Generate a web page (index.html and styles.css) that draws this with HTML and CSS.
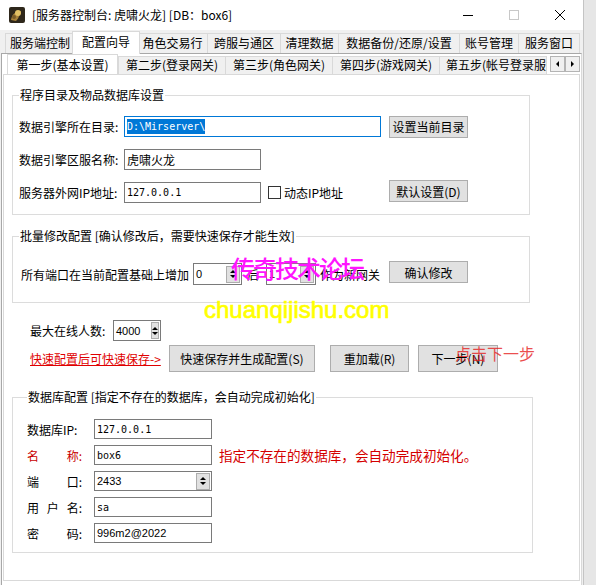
FILE: index.html
```html
<!DOCTYPE html>
<html lang="zh-CN">
<head>
    <meta charset="UTF-8">
    <meta name="viewport" content="width=device-width, initial-scale=1.0">
    <title>服务器控制台</title>
    <link rel="stylesheet" href="styles.css">
</head>
<body>
    <div class="window">
        <div class="titlebar">
            <svg class="app-icon" viewBox="0 0 16 16">
                <rect width="16" height="16" rx="2" fill="#2e271b"/>
                <path d="M2 13 C3 7, 7 4, 12 4 C10 7, 11 10, 7 14 Z" fill="#a8823a"/>
                <circle cx="9" cy="6" r="3" fill="#e2c165"/>
                <circle cx="5" cy="10" r="2" fill="#7a5c28"/>
            </svg>
            <span class="title">[服务器控制台: 虎啸火龙] [DB：box6]</span>
            <div class="caption-buttons">
                <span class="cap-btn">
                    <svg width="10" height="10"><line x1="0" y1="5.5" x2="10" y2="5.5" stroke="#000"/></svg>
                </span>
                <span class="cap-btn">
                    <svg width="10" height="10"><rect x="0.5" y="0.5" width="9" height="9" fill="none" stroke="#c8c8c8"/></svg>
                </span>
                <span class="cap-btn">
                    <svg width="10" height="10"><path d="M0 0L10 10M10 0L0 10" stroke="#000"/></svg>
                </span>
            </div>
        </div>

        <div class="main-tabs">
            <span class="tab">服务端控制</span>
            <span class="tab active">配置向导</span>
            <span class="tab">角色交易行</span>
            <span class="tab">跨服与通区</span>
            <span class="tab">清理数据</span>
            <span class="tab">数据备份/还原/设置</span>
            <span class="tab">账号管理</span>
            <span class="tab">服务窗口</span>
        </div>

        <div class="main-page">
            <div class="sub-strip">
                <div class="sub-tabs">
                    <span class="tab active">第一步(基本设置)</span>
                    <span class="tab">第二步(登录网关)</span>
                    <span class="tab">第三步(角色网关)</span>
                    <span class="tab">第四步(游戏网关)</span>
                    <span class="tab">第五步(帐号登录服</span>
                </div>
                <div class="scroll-arrows">
                    <span class="arrow-btn"><i class="tri-left"></i></span>
                    <span class="arrow-btn"><i class="tri-right"></i></span>
                </div>
            </div>

            <div class="sheet">
                <!-- 程序目录 -->
                <fieldset class="group g1">
                    <legend>程序目录及物品数据库设置</legend>
                    <div class="row">
                        <span class="lbl">数据引擎所在目录:</span>
                        <div class="edit focused w257"><span class="mono sel">D:\Mirserver\</span></div>
                        <button class="btn btn-right">设置当前目录</button>
                    </div>
                    <div class="row">
                        <span class="lbl">数据引擎区服名称:</span>
                        <div class="edit w137">虎啸火龙</div>
                    </div>
                    <div class="row">
                        <span class="lbl">服务器外网IP地址:</span>
                        <div class="edit w137"><span class="mono">127.0.0.1</span></div>
                        <span class="checkbox"></span>
                        <span class="check-text">动态IP地址</span>
                        <button class="btn btn-right raised">默认设置(D)</button>
                    </div>
                </fieldset>

                <!-- 批量修改 -->
                <fieldset class="group g2">
                    <legend>批量修改配置 [确认修改后，需要快速保存才能生效]</legend>
                    <div class="row port-row">
                        <span>所有端口在当前配置基础上增加</span>
                        <div class="edit spin w49 gap-l">
                            <span class="num">0</span>
                            <span class="spin-btn"><i class="tri-up"></i><i class="tri-down"></i></span>
                        </div>
                        <span class="mid-text">后</span>
                        <div class="edit spin w50">
                            <span class="num">1</span>
                            <span class="spin-btn"><i class="tri-up"></i><i class="tri-down"></i></span>
                        </div>
                        <span class="after-text">作为新网关</span>
                        <button class="btn btn-right confirm">确认修改</button>
                    </div>
                </fieldset>

                <div class="online-row">
                    <span>最大在线人数:</span>
                    <div class="edit spin w48">
                        <span class="num">4000</span>
                        <span class="spin-btn"><i class="tri-up"></i><i class="tri-down"></i></span>
                    </div>
                </div>

                <div class="action-row">
                    <span class="red-link">快速配置后可快速保存-&gt;</span>
                    <button class="btn save">快速保存并生成配置(S)</button>
                    <button class="btn reload">重加载(R)</button>
                    <button class="btn next">下一步(N)</button>
                </div>

                <!-- 数据库 -->
                <fieldset class="group g3">
                    <legend>数据库配置 [指定不存在的数据库，会自动完成初始化]</legend>
                    <div class="db-row">
                        <span class="db-lbl"><span>数据库IP:</span></span>
                        <div class="edit db-edit"><span class="mono">127.0.0.1</span></div>
                    </div>
                    <div class="db-row">
                        <span class="db-lbl red"><span>名</span><span>称:</span></span>
                        <div class="edit db-edit"><span class="mono">box6</span></div>
                        <span class="db-note">指定不存在的数据库，会自动完成初始化。</span>
                    </div>
                    <div class="db-row">
                        <span class="db-lbl"><span>端</span><span>口:</span></span>
                        <div class="edit db-edit spin">
                            <span class="num">2433</span>
                            <span class="spin-btn"><i class="tri-up"></i><i class="tri-down"></i></span>
                        </div>
                    </div>
                    <div class="db-row">
                        <span class="db-lbl"><span>用</span><span>户</span><span>名:</span></span>
                        <div class="edit db-edit"><span class="mono">sa</span></div>
                    </div>
                    <div class="db-row">
                        <span class="db-lbl"><span>密</span><span>码:</span></span>
                        <div class="edit db-edit"><span class="num">996m2@2022</span></div>
                    </div>
                </fieldset>
            </div>
        </div>

        <div class="watermark">
            <span class="wm-cn">传奇技术论坛</span>
            <span class="wm-url">chuanqijishu.com</span>
        </div>
        <span class="hint">点击下一步</span>
    </div>
</body>
</html>
```

FILE: styles.css
```css
body {
    margin: 0;
    background-color: #e6e6e6;
    font-family: "Noto Sans CJK SC", "Microsoft YaHei", sans-serif;
    font-size: 12px;
    color: #000;
}
.window {
    position: relative;
    width: 583px;
    height: 585px;
    overflow: hidden;
    background-color: #f0f0f0;
    border-right: 1px solid #c4c4c4;
}

/* title bar */
.titlebar {
    display: flex;
    align-items: center;
    height: 30px;
    background-color: #fff;
}
.app-icon {
    width: 16px;
    height: 16px;
    margin: 0 7px 0 9px;
}
.title {
    flex: 1;
    line-height: 16px;
    white-space: nowrap;
}
.caption-buttons {
    display: flex;
    height: 30px;
}
.cap-btn {
    width: 46px;
    display: flex;
    align-items: center;
    justify-content: center;
}

/* tabs */
.tab {
    box-sizing: border-box;
    flex: none;
    height: 20px;
    margin-right: -1px;
    border: 1px solid #d9d9d9;
    border-bottom: none;
    background-color: #f0f0f0;
    text-align: center;
    line-height: 18px;
    white-space: nowrap;
    overflow: hidden;
}
.tab.active {
    position: relative;
    z-index: 2;
    height: 23px;
    margin-bottom: -1px;
    background-color: #fff;
    line-height: 20px;
}
.main-tabs {
    display: flex;
    align-items: flex-end;
    height: 23px;
    padding-left: 5px;
}
.main-tabs .tab:nth-child(1) { width: 70px; }
.main-tabs .tab:nth-child(2) { width: 68px; margin-left: -2px; margin-right: -3px; }
.main-tabs .tab:nth-child(3) { width: 71px; }
.main-tabs .tab:nth-child(4) { width: 74px; }
.main-tabs .tab:nth-child(5) { width: 59px; }
.main-tabs .tab:nth-child(6) { width: 122px; }
.main-tabs .tab:nth-child(7) { width: 60px; }
.main-tabs .tab:nth-child(8) { width: 62px; }

.main-page {
    margin-left: 1px;
    width: 579px;
    height: 540px;
    border: 1px solid #a8a8a8;
    border-right-color: #d9d9d9;
    background-color: #fff;
}
.sub-strip {
    display: flex;
    align-items: flex-end;
    height: 20px;
}
.sub-tabs {
    display: flex;
    align-items: flex-end;
    flex: 1;
    height: 20px;
    padding-left: 7px;
    overflow: hidden;
}
.sub-tabs .tab {
    width: 108px;
    height: 18px;
    line-height: 16px;
}
.sub-tabs .tab:last-child {
    text-align: left;
    padding-left: 6px;
}
.sub-tabs .tab.active {
    width: 111px;
    height: 21px;
    margin-left: -2px;
    margin-right: 0;
    line-height: 19px;
}
.scroll-arrows {
    display: flex;
    align-self: center;
    margin-right: 1px;
}
.arrow-btn {
    box-sizing: border-box;
    width: 15px;
    height: 16px;
    border: 1px solid #b4b4b4;
    background-color: #f0f0f0;
    display: flex;
    align-items: center;
    justify-content: center;
}
.tri-left, .tri-right, .tri-up, .tri-down {
    width: 0;
    height: 0;
    border: 3px solid transparent;
}
.tri-left { border-right-color: #000; border-left-width: 0; }
.tri-right { border-left-color: #000; border-right-width: 0; }

.sheet {
    box-sizing: border-box;
    height: 507px;
    margin-left: 1px;
    margin-right: 1px;
    border: 1px solid #d9d9d9;
    padding-top: 13px;
}

/* group boxes */
.group {
    box-sizing: border-box;
    margin: 0 0 0 8px;
    padding: 0 6px;
    border: 1px solid #dcdcdc;
}
.group legend {
    padding: 0 1px;
    line-height: 14px;
}
.g1 {
    width: 518px;
    height: 127px;
    display: flex;
    flex-direction: column;
    gap: 12px;
    padding-top: 14px;
}
.g2 {
    width: 518px;
    height: 74px;
    margin-top: 14px;
    padding-top: 20px;
}
.g3 {
    width: 521px;
    height: 163px;
    margin-top: 18px;
    padding-top: 15px;
    padding-left: 14px;
}
.row {
    display: flex;
    align-items: center;
    height: 21px;
}
.lbl {
    width: 105px;
    white-space: nowrap;
}

/* edit boxes */
.edit {
    box-sizing: border-box;
    display: flex;
    align-items: center;
    height: 21px;
    padding-left: 2px;
    border: 1px solid #7a7a7a;
    background-color: #fff;
    white-space: nowrap;
}
.edit.focused { border-color: #0078d7; }
.w257 { width: 257px; }
.w137 { width: 137px; }
.w49 { width: 49px; }
.w50 { width: 50px; }
.w48 { width: 48px; }
.mono {
    font-family: "DejaVu Sans Mono", "Liberation Mono", monospace;
    font-size: 10px;
}
.num {
    font-family: "Liberation Sans", Arial, sans-serif;
    font-size: 11px;
}
.sel {
    background-color: #0078d7;
    color: #fff;
    line-height: 15px;
}
.spin-btn {
    box-sizing: border-box;
    display: flex;
    flex-direction: column;
    align-items: center;
    justify-content: center;
    gap: 2px;
    width: 14px;
    height: 17px;
    margin-left: auto;
    margin-right: 1px;
    border: 1px solid #adadad;
    background-color: #e1e1e1;
}
.tri-up { border-bottom-color: #000; border-top-width: 0; }
.tri-down { border-top-color: #000; border-bottom-width: 0; }

.checkbox {
    box-sizing: border-box;
    width: 13px;
    height: 13px;
    margin-left: 7px;
    border: 1px solid #333;
    background-color: #fff;
}
.check-text { margin-left: 3px; }

/* buttons */
.btn {
    box-sizing: border-box;
    height: 22px;
    padding: 0;
    border: 1px solid #adadad;
    background-color: #e1e1e1;
    font-family: inherit;
    font-size: 12px;
    color: #000;
}
.btn-right {
    width: 79px;
    margin-left: auto;
    margin-right: 55px;
}
.raised { align-self: flex-start; margin-top: -2px; }
.confirm { margin-top: -4px; }

.port-row { height: 22px; padding-left: 2px; }
.port-row .edit { height: 22px; }
.gap-l { margin-left: 4px; }
.mid-text { margin: 0 7px 0 5px; }
.after-text { margin-left: 4px; }

.online-row {
    display: flex;
    align-items: center;
    height: 21px;
    margin: 17px 0 0 26px;
}
.online-row span:first-child { width: 83px; }

.action-row {
    display: flex;
    align-items: center;
    height: 27px;
    margin: 4px 0 0 26px;
}
.action-row .btn { height: 27px; }
.red-link {
    color: #e00000;
    text-decoration: underline;
    width: 139px;
}
.save { width: 146px; }
.reload { width: 79px; margin-left: 15px; }
.next { width: 80px; margin-left: 9px; }

/* database rows */
.db-row {
    display: flex;
    align-items: center;
    height: 20px;
    margin-bottom: 6px;
}
.db-lbl {
    display: flex;
    justify-content: space-between;
    width: 55px;
    margin-right: 12px;
    white-space: nowrap;
}
.db-lbl.red { color: #c80000; }
.db-edit {
    width: 118px;
    height: 20px;
}
.db-note {
    margin-left: 7px;
    color: #d40000;
    font-size: 13.6px;
}

/* overlays */
.watermark {
    position: absolute;
    left: 0;
    top: 0;
}
.wm-cn {
    position: absolute;
    left: 231px;
    top: 252px;
    font-size: 24px;
    font-weight: 500;
    letter-spacing: -2px;
    line-height: 32px;
    color: #ff14ff;
    white-space: nowrap;
}
.wm-url {
    position: absolute;
    left: 204px;
    top: 298px;
    font-family: "Liberation Sans", Arial, sans-serif;
    font-size: 24px;
    line-height: 24px;
    color: #ffff00;
    -webkit-text-stroke: 0.7px #ffff00;
    white-space: nowrap;
}
.hint {
    position: absolute;
    left: 455px;
    top: 343px;
    font-size: 16px;
    line-height: 20px;
    color: rgba(230, 30, 30, 0.8);
    white-space: nowrap;
}
```
